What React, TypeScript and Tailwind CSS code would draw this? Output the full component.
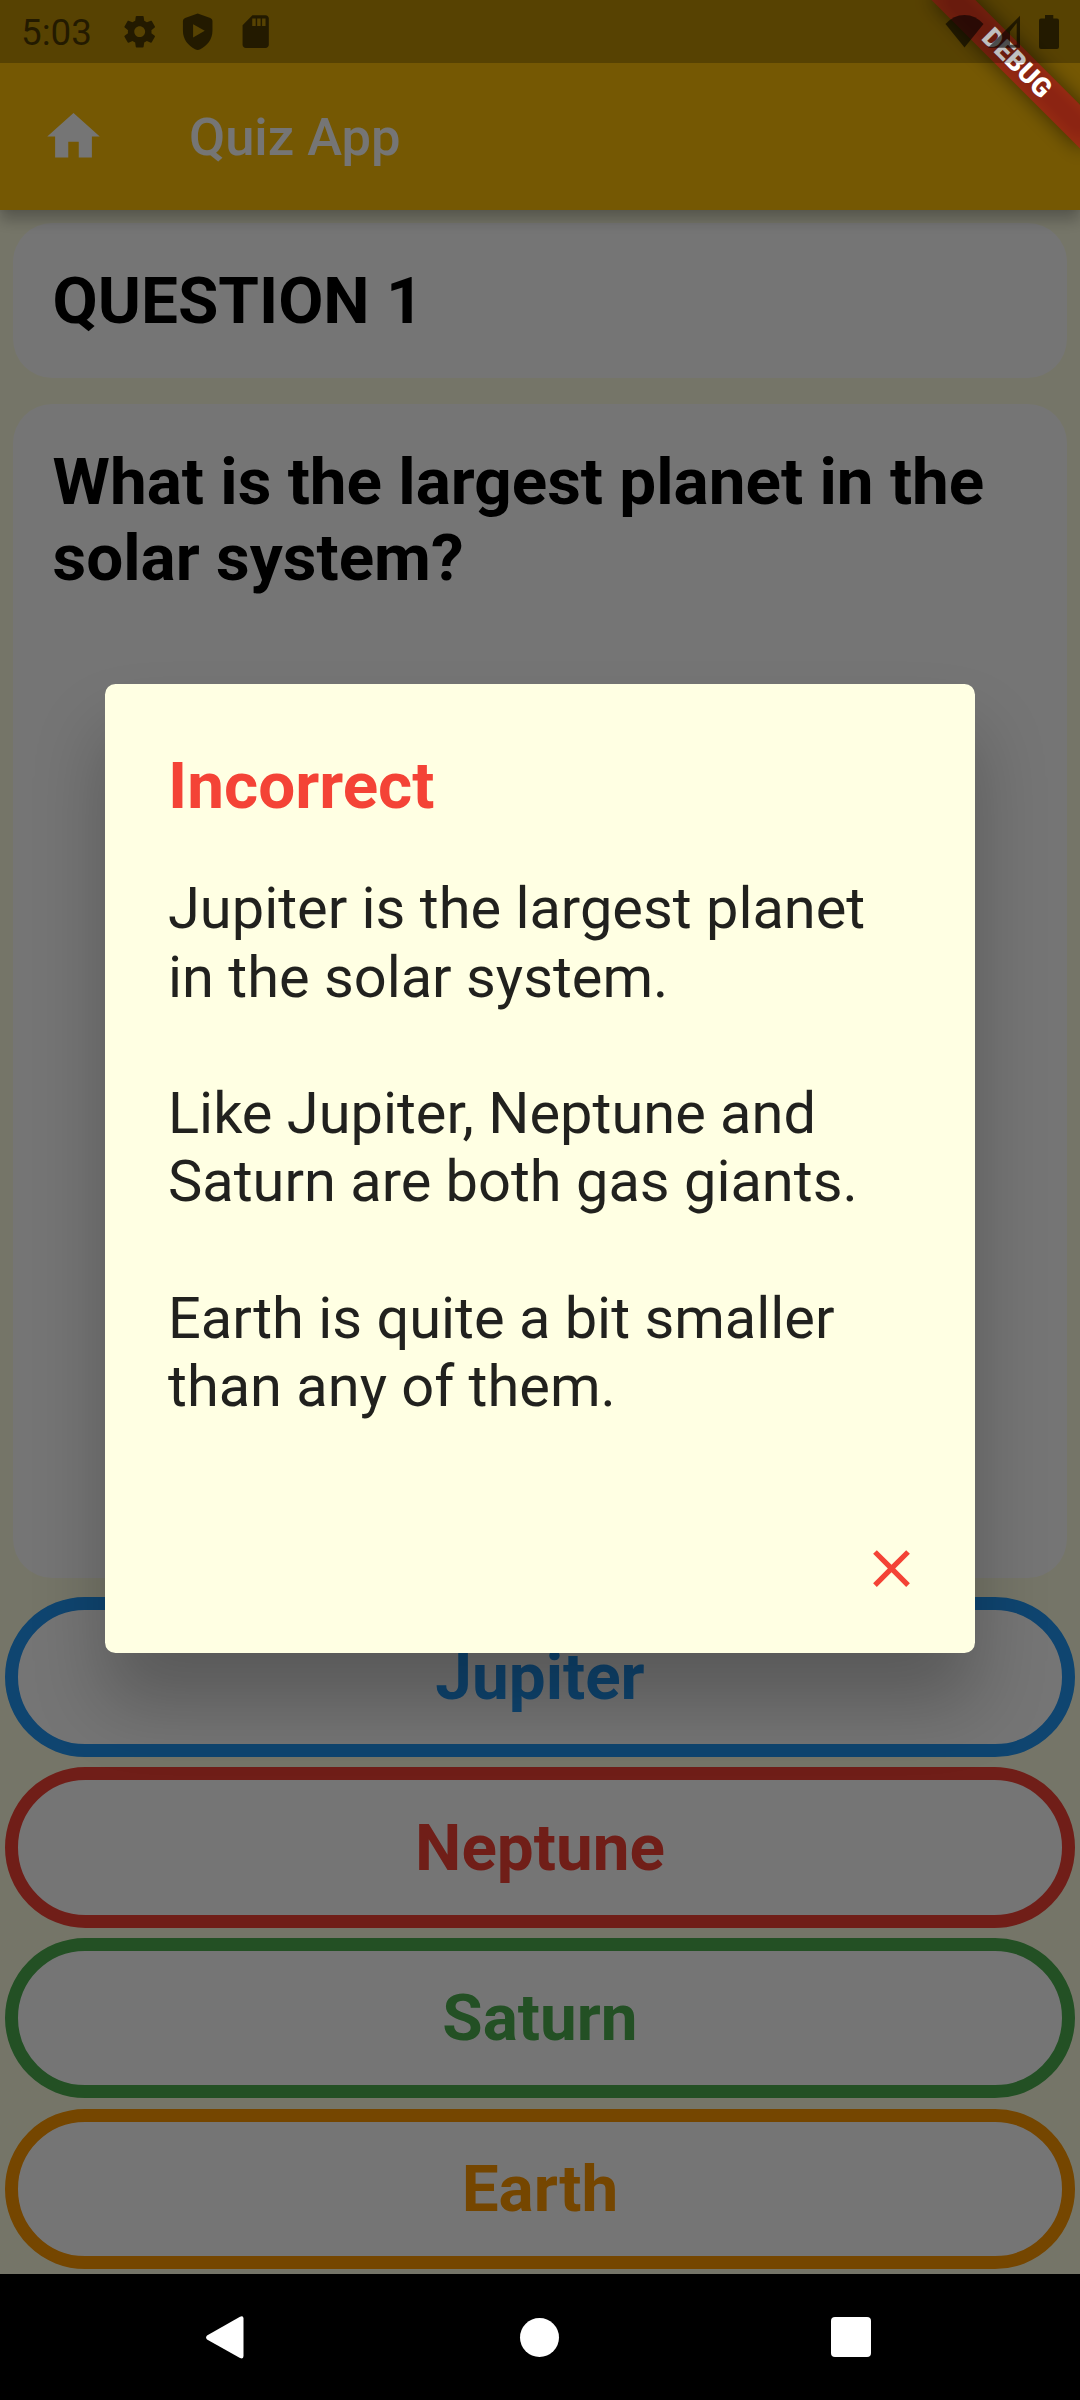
import React from 'react';

const answers = [
  { label: 'Jupiter', tone: 'border-[#2196f3] text-[#2196f3]' },
  { label: 'Neptune', tone: 'border-[#f44336] text-[#f44336]' },
  { label: 'Saturn', tone: 'border-[#4caf50] text-[#4caf50]' },
  { label: 'Earth', tone: 'border-[#ff9800] text-[#ff9800]' },
];

function StatusBar() {
  return (
    <div className="absolute inset-x-0 top-0 z-30 flex h-[63px] items-center justify-between bg-black/25 text-black/60">
      <div className="flex items-center pl-[21px]">
        <span className="w-[99.3px] pt-[2px] text-[36.75px] leading-[43px]">5:03</span>
        <div className="flex gap-[18.6px]">
          <svg className="size-[39.4px]" viewBox="0 0 24 24" fill="currentColor">
            <path d="M19.14 12.94c.04-.3.06-.61.06-.94 0-.32-.02-.64-.07-.94l2.03-1.58c.18-.14.23-.41.12-.61l-1.92-3.32c-.12-.22-.37-.29-.59-.22l-2.39.96c-.5-.38-1.03-.7-1.62-.94l-.36-2.54c-.04-.24-.24-.41-.48-.41h-3.84c-.24 0-.43.17-.47.41l-.36 2.54c-.59.24-1.13.57-1.62.94l-2.39-.96c-.22-.08-.47 0-.59.22L2.74 8.87c-.12.21-.08.47.12.61l2.03 1.58c-.05.3-.09.63-.09.94s.02.64.07.94l-2.03 1.58c-.18.14-.23.41-.12.61l1.92 3.32c.12.22.37.29.59.22l2.39-.96c.5.38 1.03.7 1.62.94l.36 2.54c.05.24.24.41.48.41h3.84c.24 0 .44-.17.47-.41l.36-2.54c.59-.24 1.13-.56 1.62-.94l2.39.96c.22.08.47 0 .59-.22l1.92-3.32c.12-.22.07-.47-.12-.61l-2.01-1.58zM12 15.3c-1.82 0-3.3-1.48-3.3-3.3s1.48-3.3 3.3-3.3 3.3 1.48 3.3 3.3-1.48 3.3-3.3 3.3z" />
          </svg>
          <svg className="size-[39.4px]" viewBox="0 0 24 24" fill="currentColor" fillRule="evenodd">
            <path d="M12 .9 4.3 3.6Q3 4.1 3 5.4V11.5C3 16.8 6.2 20.6 10.4 22.7Q12 23.5 13.6 22.7C17.8 20.6 21 16.8 21 11.5V5.4Q21 4.1 19.7 3.6ZM9.2 7.4 16.3 11.5 9.2 15.6Z" />
          </svg>
          <svg className="size-[39.4px]" viewBox="0 0 24 24" fill="currentColor" fillRule="evenodd">
            <path d="M18 2h-8L4 8v12c0 1.1.9 2 2 2h12c1.1 0 2-.9 2-2V4c0-1.1-.9-2-2-2zM9.9 3.9h2.1v4.6H9.9zM12.9 3.9h2.1v4.6h-2.1zM15.9 3.9h2.1v4.6h-2.1z" />
          </svg>
        </div>
      </div>
      <div className="flex items-center pr-[21px]">
        <svg className="h-[34px] w-[39px]" viewBox="0 0 39 34" fill="currentColor">
          <path d="M19.5 32.5.5 9Q8.5 0 19.5 0T38.5 9Z" />
        </svg>
        <svg className="ml-[3px] h-[34px] w-[33px]" viewBox="0 0 33 34" fill="currentColor" fillRule="evenodd">
          <path d="M33 .7V32.7H1ZM29.7 8V29.7H23V16.5Z" />
        </svg>
        <svg className="ml-[19px] h-[34px] w-[20px]" viewBox="0 0 20 34" fill="currentColor">
          <path d="M6 0h8.3v3.4H18q2 0 2 2V32q0 2-2 2H2q-2 0-2-2V5.4q0-2 2-2h4z" />
        </svg>
      </div>
    </div>
  );
}

function DebugBanner() {
  return (
    <div className="absolute top-0 right-0 z-20 size-[210px] overflow-hidden">
      <div className="absolute top-0 left-[210px] size-0 rotate-45">
        <div className="absolute top-[73.5px] left-[-105px] h-[31.5px] w-[210px] bg-black/50 blur-[10px]" />
        <div className="absolute top-[73.5px] left-[-105px] flex h-[31.5px] w-[210px] items-center justify-center bg-[#b71c1c]/63 text-[26.8px] leading-[31.5px] font-black text-white">
          DEBUG
        </div>
      </div>
    </div>
  );
}

function Dialog() {
  return (
    <div className="absolute inset-x-0 top-0 z-10 flex h-[2274px] items-center justify-center bg-black/54 pt-[63px]">
      <section className="flex h-[968.6px] w-[870px] flex-col rounded-[10.5px] bg-[#ffffe3] px-[63px] pt-[64px] shadow-[0_50px_72px_rgba(0,0,0,0.24)]">
        <h2 className="text-[65.625px] leading-[76.125px] font-bold text-[#f44336]">Incorrect</h2>
        <p className="mt-[50px] text-[57.75px] leading-[68.25px] whitespace-pre text-black/87">
          {'Jupiter is the largest planet\nin the solar system.\n\nLike Jupiter, Neptune and\nSaturn are both gas giants.\n\nEarth is quite a bit smaller\nthan any of them.'}
        </p>
        <button className="mt-[117px] mr-[-10.5px] size-[63px] self-end text-[#f44336]">
          <svg className="size-full" viewBox="0 0 24 24" fill="currentColor">
            <path d="M19 6.41 17.59 5 12 10.59 6.41 5 5 6.41 10.59 12 5 17.59 6.41 19 12 13.41 17.59 19 19 17.59 13.41 12z" />
          </svg>
        </button>
      </section>
    </div>
  );
}

export default function App() {
  return (
    <div className="relative flex h-[2400px] w-[1080px] flex-col overflow-hidden bg-[#ffffe3] font-['Roboto',sans-serif]">
      <header className="relative flex h-[210px] shrink-0 items-center bg-[#ffc107] pt-[63px] pl-[42px] text-white shadow-[0_10px_14px_rgba(0,0,0,0.25),0_0_5px_rgba(0,0,0,0.06)]">
        <svg className="size-[63px]" viewBox="0 0 24 24" fill="currentColor">
          <path d="M10 20v-6h4v6h5v-8h3L12 3 2 12h3v8z" />
        </svg>
        <h1 className="ml-[84px] pt-[2px] text-[52.5px] leading-[61px] font-medium">Quiz App</h1>
      </header>

      <main className="flex h-[2064px] shrink-0 flex-col text-[65.625px] leading-[76.125px] font-bold text-black">
        <div className="m-[13.125px] rounded-[39.4px] bg-white p-[39.375px]">QUESTION 1</div>
        <div className="m-[13.125px] grow rounded-[39.4px] bg-white p-[39.375px]">
          What is the largest planet in the solar system?
        </div>
        {answers.map(({ label, tone }) => (
          <button
            key={label}
            className={`m-[5.25px] flex h-[160.125px] shrink-0 items-center justify-center rounded-full border-[13.125px] bg-white pt-[0.5px] ${tone}`}
          >
            {label}
          </button>
        ))}
      </main>

      <nav className="flex h-[126px] shrink-0 items-center bg-black pl-[206px] text-white">
        <svg className="h-[43px] w-[38px]" viewBox="0 0 38 43" fill="currentColor">
          <path d="M1 19.5 34 .8Q37.500-.6 37.500 2.500V40Q37.500 43.600 34 42L1 23.500Q-.8 21.500 1 19.500Z" />
        </svg>
        <span className="ml-[276px] size-[39px] rounded-full bg-white" />
        <span className="ml-[272px] size-[40px] rounded-[4px] bg-white" />
      </nav>

      <Dialog />
      <DebugBanner />
      <StatusBar />
    </div>
  );
}
